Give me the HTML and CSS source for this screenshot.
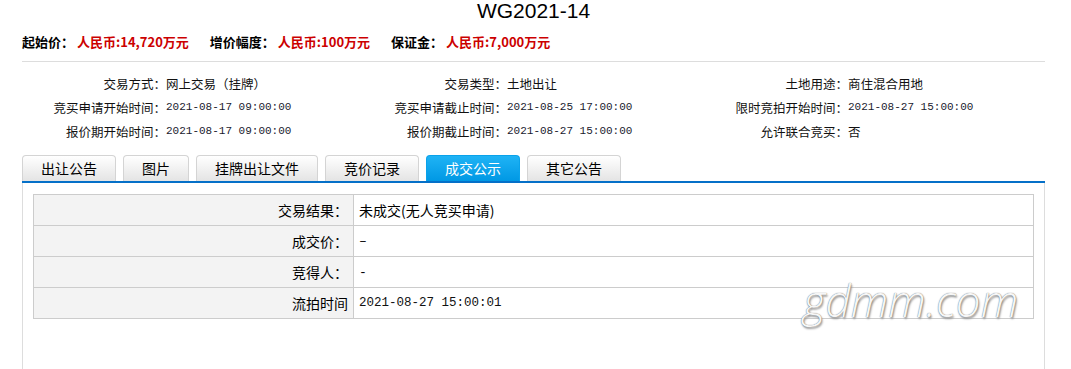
FILE: index.html
```html
<!DOCTYPE html>
<html>
  <head>
    <meta charset="utf-8">
    <link rel="stylesheet" href="styles.css">
  </head>
  <body>
    <div class="page">
      <h1 class="title">WG2021-14</h1>

      <div class="prices">
        <span class="price"><b>起始价：</b><em>人民币:14,720万元</em></span>
        <span class="price"><b>增价幅度：</b><em>人民币:100万元</em></span>
        <span class="price"><b>保证金：</b><em>人民币:7,000万元</em></span>
      </div>

      <div class="info">
        <div class="item"><span class="label">交易方式：</span><span class="value">网上交易（挂牌）</span></div>
        <div class="item"><span class="label">交易类型：</span><span class="value">土地出让</span></div>
        <div class="item"><span class="label">土地用途：</span><span class="value">商住混合用地</span></div>
        <div class="item"><span class="label">竞买申请开始时间：</span><span class="value date">2021-08-17 09:00:00</span></div>
        <div class="item"><span class="label">竞买申请截止时间：</span><span class="value date">2021-08-25 17:00:00</span></div>
        <div class="item"><span class="label">限时竞拍开始时间：</span><span class="value date">2021-08-27 15:00:00</span></div>
        <div class="item"><span class="label">报价期开始时间：</span><span class="value date">2021-08-17 09:00:00</span></div>
        <div class="item"><span class="label">报价期截止时间：</span><span class="value date">2021-08-27 15:00:00</span></div>
        <div class="item"><span class="label">允许联合竞买：</span><span class="value">否</span></div>
      </div>

      <ul class="tabs">
        <li>出让公告</li>
        <li>图片</li>
        <li>挂牌出让文件</li>
        <li>竞价记录</li>
        <li class="active">成交公示</li>
        <li>其它公告</li>
      </ul>

      <div class="panel">
        <table class="result">
          <tr>
            <th>交易结果：</th>
            <td>未成交(无人竞买申请)</td>
          </tr>
          <tr>
            <th>成交价：</th>
            <td class="mono">–</td>
          </tr>
          <tr>
            <th>竞得人：</th>
            <td class="mono">-</td>
          </tr>
          <tr>
            <th>流拍时间</th>
            <td class="date">2021-08-27 15:00:01</td>
          </tr>
        </table>
      </div>

      <div class="watermark">gdmm.com</div>
    </div>
  </body>
</html>
```

FILE: styles.css
```css
/* 页面基础 */
body {
  margin: 0;
  background: #fff;
  color: #000;
  font-family: "Noto Sans CJK SC", sans-serif;
  overflow: hidden;
}

.page {
  position: relative;
  width: 1023px;
  margin-left: 22px;
}

.title {
  margin: 0;
  font-family: "Liberation Sans", "Noto Sans CJK SC", sans-serif;
  font-size: 21px;
  font-weight: normal;
  line-height: 21px;
  text-align: center;
}

/* 价格信息 */
.prices {
  display: flex;
  gap: 21px;
  margin-top: 11px;
  padding-bottom: 9px;
  border-bottom: 1px solid #ddd;
  font-size: 13px;
  line-height: 20px;
}

.price b {
  margin-right: 3px;
  font-weight: bold;
}

.price em {
  font-style: normal;
  font-weight: bold;
  color: #cc0000;
}

/* 基本信息 */
.info {
  display: grid;
  grid-template-columns: repeat(3, 341px);
  margin-top: 9px;
  font-size: 12.5px;
  color: #111;
}

.item {
  display: flex;
  height: 24px;
  align-items: center;
}

.label {
  width: 144px;
  text-align: right;
}

.date {
  font-family: "Liberation Mono", monospace;
  font-size: 11px;
  color: #1a1a2e;
}

/* 选项卡 */
.tabs {
  display: flex;
  gap: 7px;
  margin: 12px 0 0;
  padding: 0;
  list-style: none;
  border-bottom: 2px solid #0570c8;
}

.tabs li {
  height: 25px;
  padding: 0 18px;
  border: 1px solid #d4d4d4;
  border-bottom: none;
  border-radius: 4px 4px 0 0;
  background: linear-gradient(#ffffff, #e4e4e4);
  font-size: 14px;
  line-height: 25px;
  cursor: pointer;
}

.tabs li.active {
  border-color: #0aa2ea;
  background: linear-gradient(#1fb3f5, #0098e4);
  color: #fff;
}

.panel {
  min-height: 200px;
  padding-top: 11px;
  border-left: 1px solid #ddd;
  border-right: 1px solid #ddd;
}

/* 成交结果表 */
.result {
  width: 98%;
  margin: 0 auto;
  border-collapse: collapse;
  font-size: 14px;
}

.result th,
.result td {
  height: 30px;
  padding: 0 5px;
  border: 1px solid #ccc;
  font-weight: normal;
}

.result th {
  width: 32%;
  background: #f3f3f3;
  text-align: right;
}

.result td {
  text-align: left;
}

.result td.mono {
  font-family: "Liberation Mono", monospace;
  font-size: 13px;
}

.result td.date {
  font-size: 12.5px;
  color: #111;
}

.watermark {
  position: absolute;
  left: 781px;
  top: 270px;
  font-family: "Open Sans", sans-serif;
  font-size: 44px;
  font-style: italic;
  font-weight: 300;
  color: #f6f6f6;
  text-shadow: 0 0 1px #555, 1px 2px 2px #999;
  pointer-events: none;
}
```
